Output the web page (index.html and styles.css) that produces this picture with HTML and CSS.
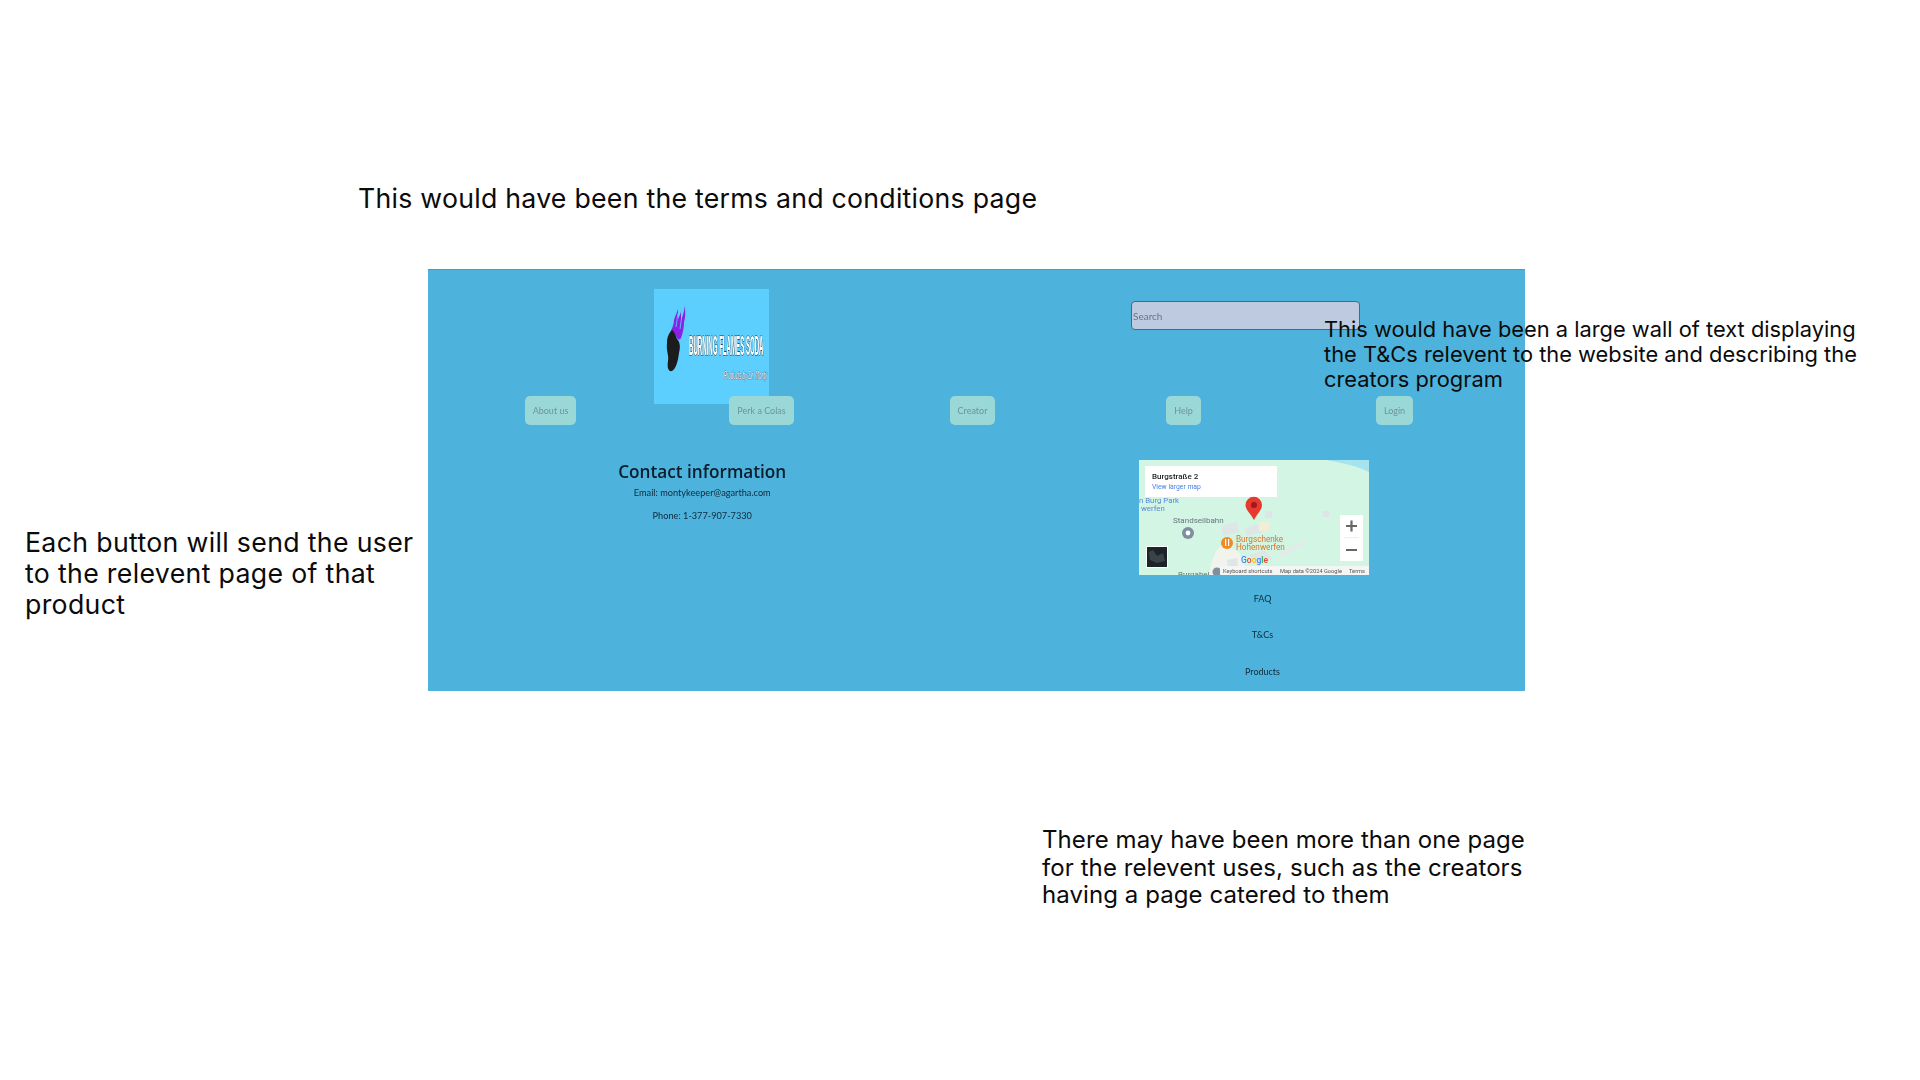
FILE: index.html
```html
<!DOCTYPE html>
<html lang="en">
<head>
<meta charset="utf-8">
<title>Terms and conditions mockup</title>
<link rel="stylesheet" href="styles.css">
</head>
<body>
<main class="slide">
  <p class="note note-top">This would have been the terms and conditions page</p>

  <section class="panel">
    <header class="brand-row">
      <svg class="logo" viewBox="0 0 115 115" width="115" height="115" role="img" aria-label="Burning Flames Soda">
        <rect width="115" height="115" fill="#5ccfff"/>
        <path d="M16 45 C17 40 20 37 20 31 C21 27 23 24 24 20 L24 30 C25 27 27 25 27 22 L27 31 C29 27 30 22 31 17 C31 22 32 27 30 33 C30 38 29 44 27 49 C25 52 23 50 22 47 C20 44 18 44 16 45Z" fill="#8a22e6"/>
        <path d="M24 24 L22 38 M28 26 L26 40" stroke="#5ccfff" stroke-width="0.8" fill="none"/>
        <path d="M18 41 C20 42 22 47 23 50 C27 54 26 60 25 64 C24 72 22 80 18 82 C14 83 13 78 14 72 C15 66 12 62 13 54 C13 48 15 44 18 41Z" fill="#1c1c1e"/>
        <text class="logo-title" transform="translate(35 66) scale(1 4.6)">BURNING FLAMES SODA</text>
        <text class="logo-sub" transform="translate(70 90) scale(1 2.6)">Products by Dr. Monty</text>
      </svg>
      <input class="search" type="text" placeholder="Search" aria-label="Search">
    </header>

    <nav class="nav">
      <a class="nav-btn">About us</a>
      <a class="nav-btn">Perk a Colas</a>
      <a class="nav-btn">Creator</a>
      <a class="nav-btn">Help</a>
      <a class="nav-btn">Login</a>
    </nav>

    <div class="lower">
      <div class="contact">
        <h2 class="contact-title">Contact information</h2>
        <p class="contact-line">Email: montykeeper@agartha.com</p>
        <p class="contact-line">Phone: 1-377-907-7330</p>
      </div>
      <div class="side">
        <svg class="map" viewBox="0 0 230 115" width="230" height="115" role="img" aria-label="Map of Burgstraße 2">
          <rect width="230" height="115" fill="#d2f6e3"/>
          <path d="M187 0 H230 V12 C218 6 204 3 187 0Z" fill="#a5e4ee"/>
          <path d="M70 115 C72 100 76 90 84 84 L100 92 L110 115Z" fill="#f1f4ec"/>
          <path d="M82 66 L98 62 L100 72 L84 76Z M105 68 L120 64 L125 72 L108 76Z M110 95 L125 90 L134 99 L118 104Z M88 100 L98 98 L99 106 L89 107Z" fill="#dfe7e6"/>
          <rect x="120" y="62" width="10" height="9" fill="#f1eed6"/>
          <rect x="126" y="51" width="7" height="7" fill="#dfe5e6"/>
          <rect x="112" y="52" width="6" height="6" fill="#dfe5e6"/>
          <rect x="184" y="51" width="6" height="6" fill="#dfe5e6"/>
          <path d="M140 94 L165 80 L167 83 L143 97Z" fill="#e3eae9"/>
          <text class="map-blue" x="0" y="43">n Burg Park</text>
          <text class="map-blue" x="2" y="51">werfen</text>
          <text class="map-grey" x="34" y="63">Standseilbahn</text>
          <circle cx="49" cy="73" r="6" fill="#7f8f9f"/>
          <circle cx="49" cy="73" r="2.4" fill="#fff"/>
          <circle cx="88" cy="83" r="6" fill="#f08a24"/>
          <rect x="86" y="79" width="1.2" height="7" fill="#fff"/>
          <rect x="89" y="79" width="1.2" height="7" fill="#fff"/>
          <text class="map-orange" x="97" y="82">Burgschenke</text>
          <text class="map-orange" x="97" y="90">Hohenwerfen</text>
          <text class="map-grey" x="39" y="117">Burgabel</text>
          <circle cx="78" cy="112" r="4.5" fill="#7f8f9f"/>
          <rect x="6" y="6" width="132" height="31" fill="#fff"/>
          <text class="map-addr" x="13" y="19">Burgstraße 2</text>
          <text class="map-link" x="13" y="29">View larger map</text>
          <path d="M115 60 C112 54 106.500 50 106.500 45 A8 8 0 0 1 123 45 C123 50 118 54 115 60Z" fill="#e8392e"/>
          <circle cx="115" cy="45" r="3" fill="#a3181a"/>
          <rect x="201" y="55" width="23" height="46" fill="#fff"/>
          <rect x="205" y="77.500" width="15" height="0.6" fill="#e2e2e2"/>
          <path d="M207 66 H218 M212.500 60.500 V71.500 M207 90 H218" stroke="#666" stroke-width="2.200" fill="none"/>
          <rect x="7" y="86" width="22" height="22" fill="#fff"/>
          <rect x="8" y="87" width="20" height="20" fill="#1d2428"/>
          <path d="M10 92 L14 90 L18 96 L24 93 L26 101 L18 103 L11 100Z" fill="#39444a"/>
          <text class="map-google" x="102" y="103"><tspan fill="#4285f4">G</tspan><tspan fill="#ea4335">o</tspan><tspan fill="#fbbc05">o</tspan><tspan fill="#4285f4">g</tspan><tspan fill="#34a853">l</tspan><tspan fill="#ea4335">e</tspan></text>
          <rect x="81" y="106" width="149" height="9" fill="#f3f6f4"/>
          <text class="map-fine" x="84" y="112.800">Keyboard shortcuts</text>
          <text class="map-fine" x="141" y="112.800">Map data ©2024 Google</text>
          <text class="map-fine" x="210" y="112.800">Terms</text>
        </svg>
        <ul class="links">
          <li class="link">FAQ</li>
          <li class="link">T&amp;Cs</li>
          <li class="link">Products</li>
        </ul>
      </div>
    </div>
  </section>

  <p class="note note-terms">This would have been a large wall of text displaying<br>the T&amp;Cs relevent to the website and describing the<br>creators program</p>
  <p class="note note-buttons">Each button will send the user<br>to the relevent page of that<br>product</p>
  <p class="note note-pages">There may have been more than one page<br>for the relevent uses, such as the creators<br>having a page catered to them</p>
</main>
</body>
</html>
```

FILE: styles.css
```css
* { box-sizing: border-box; }

html, body {
  margin: 0;
  height: 100%;
  background: #fff;
}

.slide {
  position: relative;
  width: 1920px;
  height: 1080px;
  overflow: hidden;
  font-family: Lato, "Open Sans", sans-serif;
}

/* Annotations sit freely on the slide canvas */
.note {
  position: absolute;
  margin: 0;
  font-family: Inter, "Open Sans", sans-serif;
  font-weight: 400;
  color: #0b0b0b;
  white-space: nowrap;
}

.note-top {
  left: 358px;
  top: 182px;
  font-size: 26.7px;
  line-height: 32px;
  letter-spacing: 0.25px;
}

.note-terms {
  left: 1324px;
  top: 317px;
  font-size: 21.85px;
  line-height: 25px;
}

.note-buttons {
  left: 25px;
  top: 527px;
  font-size: 26.7px;
  line-height: 31px;
  letter-spacing: 0.33px;
}

.note-pages {
  left: 1042px;
  top: 826px;
  font-size: 24px;
  line-height: 27.5px;
  letter-spacing: 0.08px;
}

/* Mock page */
.panel {
  position: absolute;
  left: 428px;
  top: 269px;
  width: 1097px;
  height: 422px;
  padding-top: 19px;
  background: #4db3dc;
  border-top: 1px solid #6f8f9f;
}

.brand-row {
  display: flex;
  align-items: flex-start;
  gap: 362px;
  padding-left: 226px;
}

.logo {
  display: block;
  flex: none;
  filter: blur(0.3px);
}

.logo-title {
  font-family: "Liberation Sans", sans-serif;
  font-weight: 700;
  font-size: 6.1px;
  fill: #fff;
  stroke: #222;
  stroke-width: 0.9px;
  paint-order: stroke;
  vector-effect: non-scaling-stroke;
}

.logo-sub {
  font-family: "Liberation Sans", sans-serif;
  font-size: 4.4px;
  font-style: italic;
  fill: #fff;
  stroke: #334;
  stroke-width: 0.5px;
  paint-order: stroke;
  vector-effect: non-scaling-stroke;
}

.search {
  flex: none;
  width: 229px;
  height: 29px;
  margin-top: 12px;
  padding: 0 1px;
  background: #bdcadf;
  border: 1px solid #3f6d88;
  border-radius: 4px;
  font: 10px Lato, sans-serif;
  color: #666;
  filter: blur(0.25px);
}

.search::placeholder { color: #6b7480; opacity: 1; }

.nav {
  display: grid;
  grid-template-columns: repeat(5, 211px);
  justify-items: center;
  margin-top: -8px;
  padding-left: 17px;
}

.nav-btn {
  display: flex;
  align-items: center;
  justify-content: center;
  height: 29px;
  padding: 0 8px;
  background: #9ad8d8;
  border-radius: 5px;
  font-size: 9px;
  color: #6f9398;
  filter: blur(0.25px);
}

.lower {
  display: grid;
  grid-template-columns: 1fr 1fr;
  margin-top: 35px;
}

.contact {
  display: flex;
  flex-direction: column;
  align-items: center;
  filter: blur(0.2px);
}

.contact-title {
  margin: 0;
  font-family: "Open Sans", sans-serif;
  font-size: 17.2px;
  line-height: 24px;
  font-weight: 600;
  color: #0b1c2c;
}

.contact-line {
  margin: 0;
  font-size: 9.200px;
  line-height: 14px;
  color: #12283a;
}

.contact-title + .contact-line { margin-top: 2px; }
.contact-line + .contact-line { margin-top: 9px; }

.side {
  padding-left: 162.500px;
}

.map {
  display: block;
  filter: blur(0.35px);
}

.map-blue { font: 7.800px "Roboto", sans-serif; fill: #5b86d8; }
.map-grey { font: 8px "Roboto", sans-serif; fill: #68747c; }
.map-orange { font: 8.200px "Roboto", sans-serif; fill: #d8742a; }
.map-addr { font: 500 8px "Roboto", sans-serif; fill: #222; }
.map-link { font: 6.800px "Roboto", sans-serif; fill: #4a80e0; }
.map-google { font: 500 8.500px "Roboto", sans-serif; }
.map-fine { font: 5.700px "Roboto", sans-serif; fill: #555; }

.links {
  display: flex;
  flex-direction: column;
  width: 247px;
  margin: 0;
  padding: 16.500px 0 0;
  list-style: none;
  gap: 22.700px;
  filter: blur(0.2px);
}

.link {
  font-size: 9px;
  line-height: 14px;
  text-align: center;
  color: #12283a;
}
```
